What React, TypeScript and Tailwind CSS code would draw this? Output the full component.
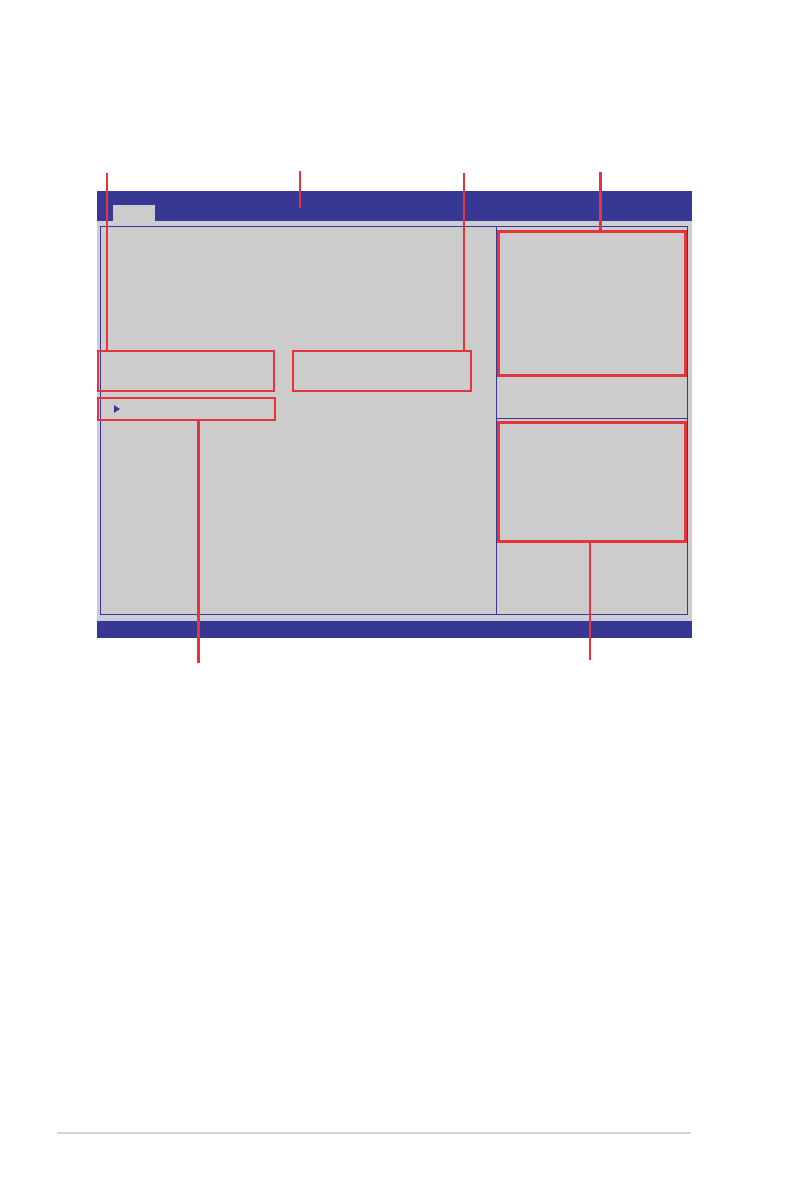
import React from 'react';

const RED = 'bg-[#e5343a]';

function Callout({ className }: { className: string }) {
  return <div className={`absolute ${RED} ${className}`} />;
}

export default function App() {
  return (
    <div className="relative w-[794px] h-[1196px] bg-white overflow-hidden">
      {/* BIOS screen */}
      <div className="ml-[97px] pt-[191px] w-[595px] flex flex-col">
        {/* menu bar with tab */}
        <div className="h-[30px] bg-[#373893] flex items-end pl-[16px]">
          <div className="w-[42px] h-[16px] bg-[#cccccc]" />
        </div>

        {/* body */}
        <div className="h-[400px] bg-[#cdcdd6] pt-[5px] pl-[3px] pr-[4px] pb-[6px]">
          <div className="h-full flex border border-[#373893] bg-[#cccccc]">
            {/* left panel */}
            <div className="w-[396px] border-r border-[#373893] pt-[123px] flex flex-col">
              <div className="flex gap-[17px] -ml-[4px]">
                <div className="w-[178px] h-[42px] border-2 border-[#e5343a]" />
                <div className="w-[180px] h-[42px] border-2 border-[#e5343a]" />
              </div>
              <div className="-ml-[4px] mt-[5px] w-[179px] h-[24px] border-2 border-[#e5343a] flex items-center pl-[15px]">
                <svg width="6" height="8" viewBox="0 0 6 8">
                  <path d="M0 0 L6 4 L0 8 Z" fill="#373893" />
                </svg>
              </div>
            </div>

            {/* right panel */}
            <div className="flex-1 flex flex-col pt-[3px]">
              <div className="w-[190px] h-[147px] border-[3px] border-[#e5343a]" />
              <div className="mt-[41px] h-px bg-[#373893]" />
              <div className="mt-[2px] w-[190px] h-[122px] border-[3px] border-[#e5343a]" />
            </div>
          </div>
        </div>

        {/* status bar */}
        <div className="h-[17px] bg-[#373893]" />
      </div>

      {/* page footer rule */}
      <div className="ml-[57px] mt-[494px] w-[634px] h-[2px] bg-[#d4d4d4]" />

      {/* callout lines */}
      <Callout className="left-[106px] top-[173px] w-[2px] h-[178px]" />
      <Callout className="left-[299px] top-[171px] w-[2px] h-[37px]" />
      <Callout className="left-[463px] top-[173px] w-[2px] h-[178px]" />
      <Callout className="left-[599px] top-[172px] w-[3px] h-[59px]" />
      <Callout className="left-[197px] top-[420px] w-[3px] h-[243px]" />
      <Callout className="left-[589px] top-[543px] w-[2px] h-[117px]" />
    </div>
  );
}
